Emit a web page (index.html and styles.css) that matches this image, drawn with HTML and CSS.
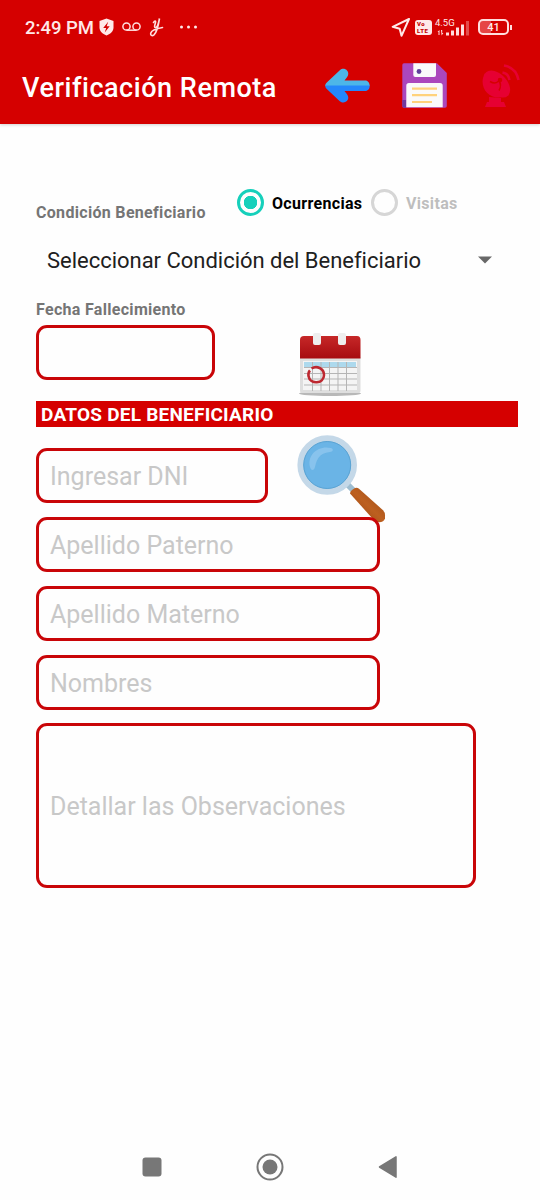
FILE: index.html
```html
<!DOCTYPE html>
<html lang="es">
<head>
<meta charset="utf-8">
<title>Verificación Remota</title>
<link rel="stylesheet" href="styles.css">
</head>
<body>
<header class="header">
  <div class="status">
    <span class="clock">2:49 PM</span>
    <svg class="status-left" width="104" height="24" viewBox="96 15 104 24" fill="none" stroke="#ffdede" stroke-width="1.5">
      <path d="M106.500 18.500l7 2.600v6.400c0 3.700-2.800 6.200-7 8-4.200-1.800-7-4.300-7-8v-6.400z" fill="#ffe9e9" stroke="none"/>
      <path d="M108.200 21.800l-5 6.200h3l-1.500 4.400 5-6.200h-3z" fill="#d50000" stroke="none"/>
      <circle cx="126.500" cy="26.500" r="3.600"/><circle cx="136.500" cy="26.500" r="3.600"/><path d="M126.500 30.200h10"/>
      <path d="M153.500 22.500c1-2 2.500-2 2 0-.7 3-1.800 5 .2 5 1.800 0 3-5 3.800-9-1 6-2.700 14-5.500 16.400-2 1.500-3.700.4-3.300-1.600.8-3.200 6-4.800 11.800-5.800" stroke-linecap="round" stroke-width="1.600"/>
      <g fill="#ffe9e9" stroke="none"><circle cx="181.500" cy="27" r="1.500"/><circle cx="188.500" cy="27" r="1.500"/><circle cx="195.500" cy="27" r="1.500"/></g>
    </svg>
    <div class="status-right">
      <svg width="19" height="20" viewBox="391 17 19 20"><path d="M409 19l-16.300 7.800 7 2 1.800 7z" fill="none" stroke="#ffe9e9" stroke-width="2" stroke-linejoin="round"/></svg>
      <span class="volte"><span>Vo</span><span>LTE</span></span>
      <span class="signal">
        <span class="net">4.5G</span>
        <svg class="bars" width="36" height="16" viewBox="435 20 36 16" fill="#ffdede">
          <path d="M437.500 31l2-2v5h-1v-3zM441 29h1.200v3h1.200l-1.800 2.500z"/>
          <rect x="446" y="31.500" width="3" height="3"/><rect x="451" y="29.500" width="3" height="5"/><rect x="456" y="26.500" width="3" height="8"/><rect x="461" y="23.500" width="3" height="11"/><rect x="466" y="20" width="3" height="14.500" opacity=".35"/>
        </svg>
      </span>
      <span class="battery">41</span><i class="battery-tip"></i>
    </div>
  </div>
  <div class="appbar">
    <h1 class="title">Verificación Remota</h1>
    <div class="actions">
      <svg width="46" height="38" viewBox="325 67 46 38">
        <path d="M325.200 86c0-1.500.6-2.500 1.600-3.500l13-12.300c5-4.200 11.200 2 7.200 7.100l-2.500 3.200H365c3.200 0 4.700 2.500 4.700 5.500z" fill="#4db6e8"/>
        <path d="M325.200 85.500c0 1.500.6 2.700 1.600 3.600l13 12.100c5 4.100 11.200-2 7.200-7l-2.500-3.200H365c3.200 0 4.700-2.300 4.700-5.500z" fill="#2487fb"/>
      </svg>
      <svg width="46" height="46" viewBox="402 63 46 46">
        <path d="M404 63.300h33l9.800 9.700v33q0 1.800-1.800 1.800H404q-1.700 0-1.700-1.800V65q0-1.700 1.700-1.700z" fill="#ab47bc"/>
        <path d="M402.300 100h4v7.800H404q-1.700 0-1.700-2z" fill="#703a9d"/>
        <path d="M413.300 63.300H436V75q0 2-2 2h-18.700q-2 0-2-2z" fill="#fafafa"/><circle cx="419" cy="71.500" r="2.400" fill="#60409c"/>
        <path d="M409 83h31q2.700 0 2.700 2.700v21.500h-36.400V85.700q0-2.700 2.700-2.700z" fill="#fafafa"/>
        <path d="M412 88.700h25M412 95.200h25M412 102h20" stroke="#ffd27b" stroke-width="2.200"/>
      </svg>
      <svg width="42" height="46" viewBox="480 63 42 46" fill="none" stroke="#e60032">
        <path d="M486 73c-8 14 5 31 24 22z" fill="#e60032" stroke="none"/>
        <ellipse cx="498" cy="84" rx="16" ry="10" transform="rotate(47 498 84)" fill="#e60032" stroke="none"/>
        <path d="M491 81.500q5 3 8 0l2-1M500 80.500q3 5 0 10" stroke="#d50000" stroke-width="1.500"/>
        <circle cx="501" cy="80" r="2.300" fill="#d50000" stroke="none"/>
        <path d="M503.500 72.500q6 1 7 7.500M505 65.500q12 2 14.500 14.500" stroke-width="2.600"/>
        <path d="M490 97v5h-2l-2 5h21l-2-5h-3v-4z" fill="#e60032" stroke="none"/>
      </svg>
    </div>
  </div>
</header>

<main class="form">
  <div class="condition">
    <span class="label condition-label">Condición Beneficiario</span>
    <div class="radios">
      <span class="radio radio-on"></span><span class="radio-text ocurrencias">Ocurrencias</span>
      <span class="radio"></span><span class="radio-text muted">Visitas</span>
    </div>
  </div>
  <div class="select"><span class="select-text">Seleccionar Condición del Beneficiario</span>
    <svg width="14" height="8" viewBox="0 0 14 8"><path d="M0 .5h14L7 7.500z" fill="#686868"/></svg>
  </div>
  <div class="label date-label"><span>Fecha Fallecimiento</span></div>
  <div class="date-row">
    <div class="field date-field"></div>
    <svg class="calendar" width="66" height="68" viewBox="297 331 66 68">
      <defs><linearGradient id="red" x2="0" y2="1"><stop stop-color="#c62828"/><stop offset="1" stop-color="#a70b10"/></linearGradient></defs>
      <ellipse cx="330" cy="393.500" rx="31" ry="2.500" fill="#b8b8b8"/>
      <path d="M300 357h60.500v34q0 2-2 2H302q-2 0-2-2z" fill="#dedede"/>
      <path d="M303 361h54v29h-54z" fill="#f4f4f4"/>
      <path d="M304 362h52v5h-52z" fill="#add9ed"/>
      <path d="M312.500 362v29M321 362v29M329.500 362v29M338 362v29M346.500 362v29M304 367.500h53M304 373.500h53M304 379h53M304 385h53" stroke="#b5b5b5"/>
      <path d="M300 358.500V340q0-4 4-4h53q3.500 0 3.500 4v18.500z" fill="url(#red)"/>
      <path d="M313 335q0-2 2-2h4q2 0 2 2v8q0 2-2 2h-4q-2 0-2-2zM338 335q0-2 2-2h4q2 0 2 2v8q0 2-2 2h-4q-2 0-2-2z" fill="#eee"/>
      <path d="M311.500 368.500c5-3 12.500-.5 12.500 6.500 0 9-14 10-15.500 1-.3-2 0-4 1.500-5.500" fill="none" stroke="#bd2830" stroke-width="2.600"/>
    </svg>
  </div>
  <h2 class="section"><span>DATOS DEL BENEFICIARIO</span></h2>
  <div class="dni-row">
    <div class="field dni"><span>Ingresar DNI</span></div>
    <svg class="lens" width="92" height="92" viewBox="296 433 92 92">
      <defs><linearGradient id="wood" x1="0" y1="1" x2="1" y2="0"><stop stop-color="#934311"/><stop offset=".5" stop-color="#bd6020"/><stop offset="1" stop-color="#984816"/></linearGradient></defs>
      <path d="M346 483l9 9" stroke="#9ebdd0" stroke-width="6"/>
      <path d="M350 493.500q0-2 2-3.500l3-2q2-1 4 .7l24 21.500q2 2 2 5v3q-1 4-6 4-3 0-5-2z" fill="url(#wood)"/>
      <circle cx="327.200" cy="465" r="26.800" fill="#8cc7ef" stroke="#c4d8e8" stroke-width="6"/>
      <circle cx="327.200" cy="465" r="23.500" fill="#6ab4e6" stroke="#5aa3d3" stroke-width="1"/>
      <path d="M310 467c-3-12 8-22 21-19 3 1 2 4-1 4-8 1-13 4-15 15-1 4-4 4-5 0z" fill="#8dc5ed" opacity=".85"/>
    </svg>
  </div>
  <div class="field"><span>Apellido Paterno</span></div>
  <div class="field"><span>Apellido Materno</span></div>
  <div class="field"><span>Nombres</span></div>
  <div class="field notes"><span>Detallar las Observaciones</span></div>
</main>

<nav class="nav">
  <svg width="20" height="20"><rect x=".5" y=".5" width="19" height="19" rx="3" fill="#777"/></svg>
  <svg width="28" height="28"><circle cx="14" cy="14" r="12.500" fill="none" stroke="#777" stroke-width="2"/><circle cx="14" cy="14" r="7.500" fill="#777"/></svg>
  <svg width="20" height="24"><path d="M18 1.800v20.400L1.500 12z" fill="#777" stroke="#777" stroke-width="1.500" stroke-linejoin="round"/></svg>
</nav>
</body>
</html>
```
FILE: styles.css
```css
* { box-sizing: border-box; }
body { margin: 0; width: 540px; height: 1200px; display: flex; flex-direction: column; background: #fefefe; font-family: Roboto, sans-serif; overflow: hidden; }
svg { display: block; flex: none; }
span { white-space: nowrap; }
.header { height: 124px; background: #d50000; box-shadow: 0 1px 3px rgba(0,0,0,.18); flex: none; }
.status { height: 54px; display: flex; align-items: center; padding: 0 28px 0 25px; color: #ffe9e9; }
.clock { width: 71px; font-size: 18.500px; font-weight: 500; padding-top: 1px; }
.status-right { margin-left: auto; display: flex; align-items: center; }
.volte { margin-left: 5px; width: 17px; height: 15px; border-radius: 3px; background: #ffe9e9; color: #c40000; font-size: 6px; letter-spacing: .5px; line-height: 7px; font-weight: 900; display: flex; flex-direction: column; padding: 0 2px; }
.signal { width: 36px; height: 20px; margin: 0 7px 0 3px; display: grid; }
.net, .bars { grid-area: 1 / 1; }
.net { font-size: 9.500px; line-height: 11px; }
.bars { align-self: end; }
.battery { width: 31px; height: 16px; border: 2px solid #ffdede; border-radius: 5px; text-align: center; font-size: 11px; line-height: 13px; font-weight: 500; background: linear-gradient(90deg, #e64545 40%, transparent 40%); }
.battery-tip { width: 2px; height: 5px; background: #ffdede; margin-left: 1px; }
.appbar { height: 70px; display: flex; align-items: center; padding: 0 19px 6px 22px; }
.title { margin: 3px 0 0; color: #fff; font-size: 27px; font-weight: 500; letter-spacing: .54px; white-space: nowrap; }
.actions { display: flex; align-items: center; gap: 31px; margin-left: auto; }
.form { padding: 64px 22px 0 36px; flex: 1; }
.label { color: #757575; font-size: 16px; font-weight: 700; line-height: 20px; letter-spacing: .31px; }
.condition { height: 36px; display: flex; }
.condition-label { width: 201px; padding-top: 15px; }
.radios { display: flex; align-items: center; height: 29px; }
.radio { width: 27px; height: 27px; border: 3px solid #d6d6d6; border-radius: 50%; flex: none; }
.radio-on { border-color: #16d0bb; background: radial-gradient(circle, #16d0bb 6.500px, transparent 7px); }
.radio-text { font-size: 16px; font-weight: 700; color: #000; margin-left: 8px; letter-spacing: .32px; padding-top: 1px; }
.ocurrencias { width: 99px; }
.muted { color: #bebebe; }
.select { height: 71px; display: flex; align-items: center; justify-content: space-between; padding: 1px 26px 0 11px; font-size: 22px; letter-spacing: -.02px; color: #202020; }
.date-label { height: 30px; padding-top: 5px; }
.date-row { height: 76px; display: flex; }
.field { width: 344px; height: 55px; border: 3px solid #c90508; border-radius: 11px; margin-bottom: 13.800px; padding: 2px 11px 0; display: flex; align-items: center; font-size: 25px; font-weight: 400; color: #c8c8c8; position: relative; z-index: 1; }
.date-field { width: 179px; }
.calendar { margin: 6px 0 0 82px; }
.section { margin: 0 0 21px; height: 26px; background: #d50000; color: #fff; font-size: 19px; font-weight: 700; line-height: 28px; letter-spacing: .23px; padding-left: 5px; }
.dni-row { height: 69px; display: flex; }
.dni { width: 232px; }
.lens { margin: -15px 0 0 28px; }
.notes { width: 440px; height: 165px; }
.nav { height: 66px; display: grid; grid-template-columns: 118px 118px 118px; justify-content: center; justify-items: center; align-items: center; flex: none; }
```
